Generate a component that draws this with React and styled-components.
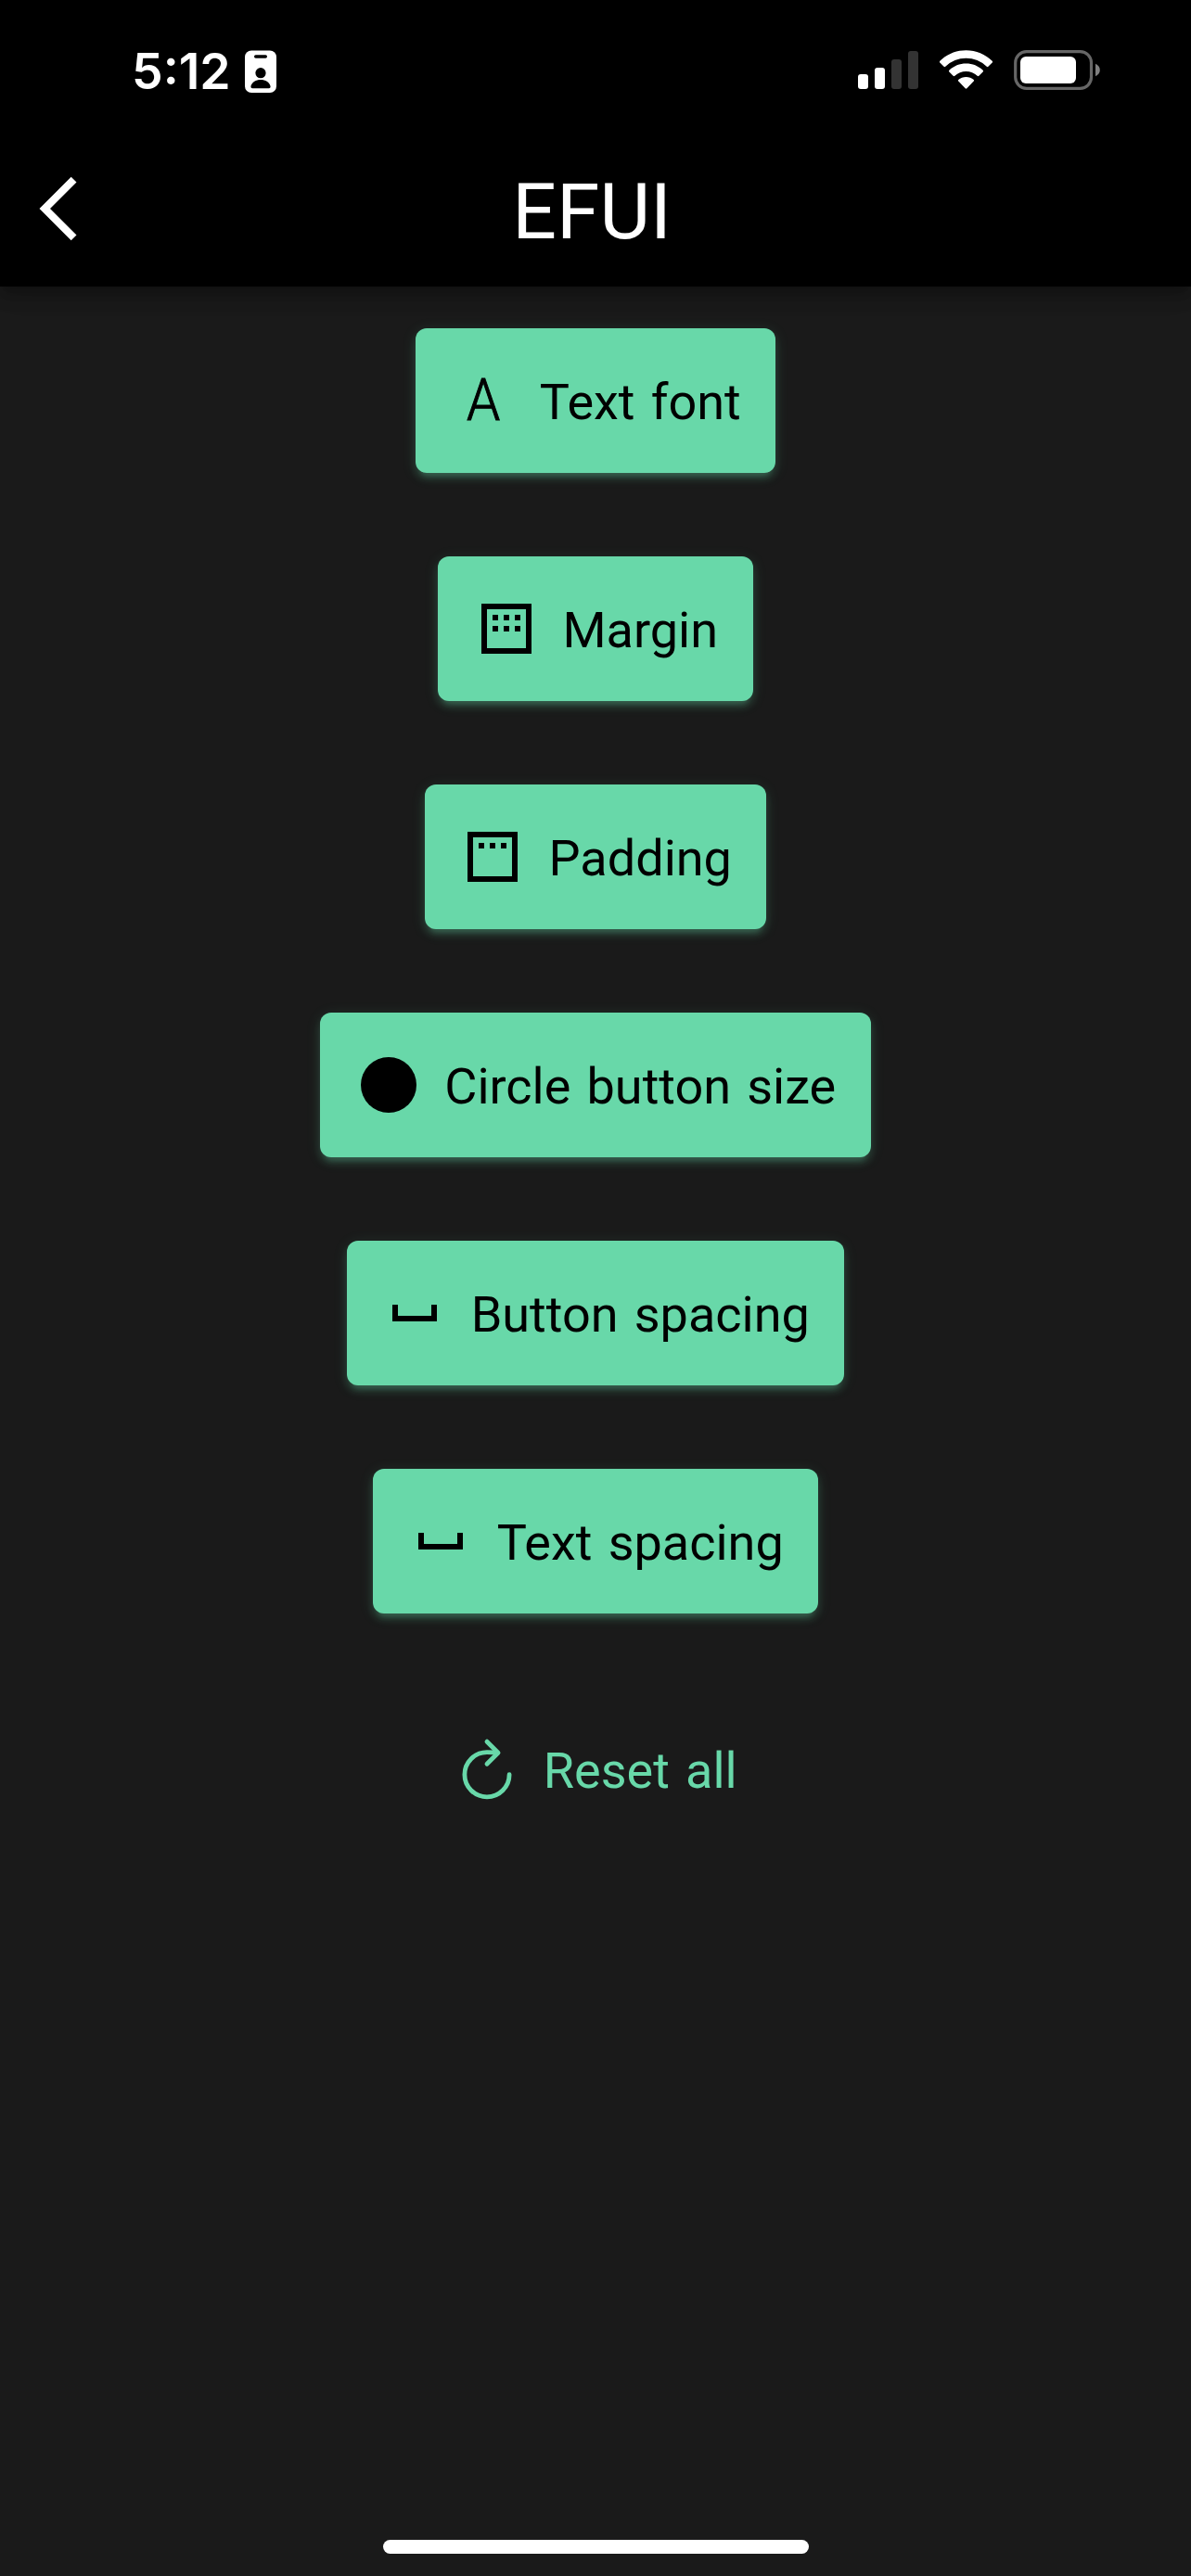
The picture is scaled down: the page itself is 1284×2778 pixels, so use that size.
import React from "react";
import styled, { createGlobalStyle } from "styled-components";

const accent = "#68d8a9";

const GlobalStyle = createGlobalStyle`
  * { box-sizing: border-box; }
  body { margin: 0; background: #1a1a1a; }
`;

const Screen = styled.div`
  width: 1284px;
  height: 2778px;
  display: flex;
  flex-direction: column;
  overflow: hidden;
  background: #1a1a1a;
  color: #fff;
  font-family: Roboto, "Liberation Sans", sans-serif;
`;

const Header = styled.header`
  height: 309px;
  flex: none;
  background: #000;
  box-shadow: 0 6px 12px -3px rgba(0, 0, 0, 0.2), 0 12px 15px rgba(0, 0, 0, 0.14),
    0 3px 30px rgba(0, 0, 0, 0.12);
`;

const StatusBar = styled.div`
  height: 141px;
  padding: 54px 97px 0 142px;
  display: flex;
  justify-content: space-between;
  align-items: flex-start;
`;

const StatusGroup = styled.div`
  display: flex;
  align-items: flex-start;
  gap: ${(p) => p.$gap}px;
`;

const Time = styled.span`
  width: 106px;
  font: 600 53.5px/46px Inter, sans-serif;
  white-space: nowrap;
`;

const TitleBar = styled.div`
  height: 168px;
  display: grid;
  grid-template-columns: 168px 1fr 168px;
  align-items: center;
`;

const BackButton = styled.button`
  width: 126px;
  height: 168px;
  padding: 0;
  border: 0;
  background: none;
  color: #fff;
  display: flex;
  align-items: center;
  justify-content: center;
`;

const Title = styled.h1`
  margin: 0;
  padding: 8px 8px 0 0;
  text-align: center;
  font-size: 84px;
  font-weight: 400;
  line-height: 98px;
`;

const Options = styled.main`
  flex: 1;
  padding-top: 45px;
  display: flex;
  flex-direction: column;
  align-items: center;
  gap: 90px;
`;

const OptionButton = styled.button`
  height: 156px;
  padding: 0 37.5px 0 37.5px;
  border: 0;
  border-radius: 12px;
  display: flex;
  align-items: center;
  gap: 24.5px;
  font: 400 54px/63px Roboto, "Liberation Sans", sans-serif;
  word-spacing: 3.8px;
  white-space: nowrap;
  color: ${(p) => (p.$flat ? accent : "#000")};
  background: ${(p) => (p.$flat ? "transparent" : accent)};
  box-shadow: ${(p) =>
    p.$flat
      ? "none"
      : "0 9px 6px -6px rgba(105,217,170,.2), 0 6px 9px rgba(105,217,170,.16), 0 3px 16px rgba(105,217,170,.14)"};
`;

const Label = styled.span`
  padding-top: 3px;
`;

const Icon = styled.svg`
  display: block;
  width: 72px;
  height: 72px;
  flex: none;
`;

const LetterIcon = styled.span`
  width: 72px;
  text-align: center;
  font-size: 63px;
  font-weight: 300;
  line-height: 72px;
  -webkit-text-stroke: 1px currentColor;
  transform: scaleX(0.92);
`;

const HomeArea = styled.footer`
  height: 39px;
  flex: none;
  display: flex;
  justify-content: center;
`;

const HomeIndicator = styled.div`
  width: 459px;
  height: 15px;
  border-radius: 8px;
  background: #fff;
`;

const MarginIcon = () => (
  <Icon viewBox="0 0 24 24" fill="currentColor">
    <path fillRule="evenodd" d="M3 3h18v18H3zM5 5v14h14V5z" />
    <path d="M7 7h2v2H7zM11 7h2v2h-2zM15 7h2v2h-2zM7 11h2v2H7zM11 11h2v2h-2zM15 11h2v2h-2z" />
  </Icon>
);

const PaddingIcon = () => (
  <Icon viewBox="0 0 24 24" fill="currentColor">
    <path fillRule="evenodd" d="M3 3h18v18H3zM5 5v14h14V5z" />
    <path d="M7 7h2v2H7zM11 7h2v2h-2zM15 7h2v2h-2z" />
  </Icon>
);

const CircleIcon = () => (
  <Icon viewBox="0 0 24 24" fill="currentColor">
    <circle cx="12" cy="12" r="10" />
  </Icon>
);

const SpaceIcon = () => (
  <Icon viewBox="0 0 24 24" fill="currentColor">
    <path d="M18 9v4H6V9H4v6h16V9z" />
  </Icon>
);

const ResetIcon = () => (
  <Icon
    viewBox="17 17 478 478"
    fill="none"
    stroke="currentColor"
    strokeWidth="32"
    strokeLinecap="round"
  >
    <path strokeMiterlimit="10" d="M320 146s24.36-12-64-12a160 160 0 1 0 160 160" />
    <path strokeLinejoin="round" d="M256 58l80 80-80 80" />
  </Icon>
);

const BadgeIcon = () => (
  <svg width="34" height="46" viewBox="0 0 34 46">
    <rect y=".5" width="34" height="45.5" rx="7" fill="#fff" />
    <rect x="10" y="5.3" width="14" height="3.4" rx="1.7" />
    <circle cx="17" cy="24.7" r="5.6" />
    <path d="M8.2 41.2c-1.5 0-2-1-1.7-2.5C7.600 34.500 12 32 17 32s9.400 2.500 10.500 6.700c.3 1.500-.2 2.500-1.700 2.500z" />
  </svg>
);

const SignalIcon = () => (
  <svg width="65" height="43" viewBox="0 0 65 43" fill="#fff">
    <rect y="26" width="11" height="16" rx="3" />
    <rect x="18" y="19" width="11" height="23" rx="3" />
    <rect x="36" y="10" width="11" height="32" rx="3" fill="#333" />
    <rect x="54" y="1" width="11" height="41" rx="3" fill="#333" />
  </svg>
);

const WifiIcon = () => (
  <svg width="57" height="43" viewBox="0 0 57.4 43" fill="#fff">
    <path d="M28.700 0C39.500 0 49.700 4.200 57.100 11.700q.9.900 0 1.800l-4.300 4.300q-.8.800-1.700 0a32 32 0 0 0-44.800 0q-.9.800-1.700 0L.3 13.500q-.9-.9 0-1.800C7.700 4.200 17.900 0 28.700 0z" />
    <path d="M28.700 14.500c6.900 0 13.400 2.600 18.300 7.300q.9.900 0 1.800l-4.300 4.300q-.9.800-1.800 0a18 18 0 0 0-24.400 0q-.9.800-1.800 0l-4.300-4.300q-.9-.9 0-1.800c4.900-4.700 11.400-7.300 18.300-7.300z" />
    <path d="M28.700 29c3.100 0 6 1.100 8.300 3q.8.800 0 1.700l-7.400 7.700q-.9.900-1.800 0l-7.400-7.700q-.8-.9 0-1.700c2.300-1.900 5.200-3 8.300-3z" />
  </svg>
);

const BatteryIcon = () => (
  <svg width="94" height="43" viewBox="0 0 94 43">
    <rect x="1.700" y="1.700" width="81.800" height="39.600" rx="12" fill="none" stroke="#666" strokeWidth="3.200" />
    <rect x="7" y="7" width="60" height="29" rx="6" fill="#fff" />
    <path d="M88 14.800c3 1.200 4.800 3.700 4.800 6.700s-1.800 5.500-4.800 6.700z" fill="#808080" />
  </svg>
);

const options = [
  { label: "Text font", icon: <LetterIcon>A</LetterIcon> },
  { label: "Margin", icon: <MarginIcon /> },
  { label: "Padding", icon: <PaddingIcon /> },
  { label: "Circle button size", icon: <CircleIcon /> },
  { label: "Button spacing", icon: <SpaceIcon /> },
  { label: "Text spacing", icon: <SpaceIcon /> },
  { label: "Reset all", icon: <ResetIcon />, flat: true },
];

export default function App() {
  return (
    <>
      <GlobalStyle />
      <Screen>
        <Header>
          <StatusBar>
            <StatusGroup $gap={16}>
              <Time>5:12</Time>
              <BadgeIcon />
            </StatusGroup>
            <StatusGroup $gap={23}>
              <SignalIcon />
              <WifiIcon />
              <BatteryIcon />
            </StatusGroup>
          </StatusBar>
          <TitleBar>
            <BackButton aria-label="Back">
              <svg width="42" height="70" viewBox="0 0 42 70" fill="currentColor">
                <path d="M.5 35 34.700.7l5.800 5.800L12 35l28.500 28.500-5.800 5.800z" />
              </svg>
            </BackButton>
            <Title>EFUI</Title>
          </TitleBar>
        </Header>
        <Options>
          {options.map((o) => (
            <OptionButton key={o.label} $flat={o.flat}>
              {o.icon}
              <Label>{o.label}</Label>
            </OptionButton>
          ))}
        </Options>
        <HomeArea>
          <HomeIndicator />
        </HomeArea>
      </Screen>
    </>
  );
}
